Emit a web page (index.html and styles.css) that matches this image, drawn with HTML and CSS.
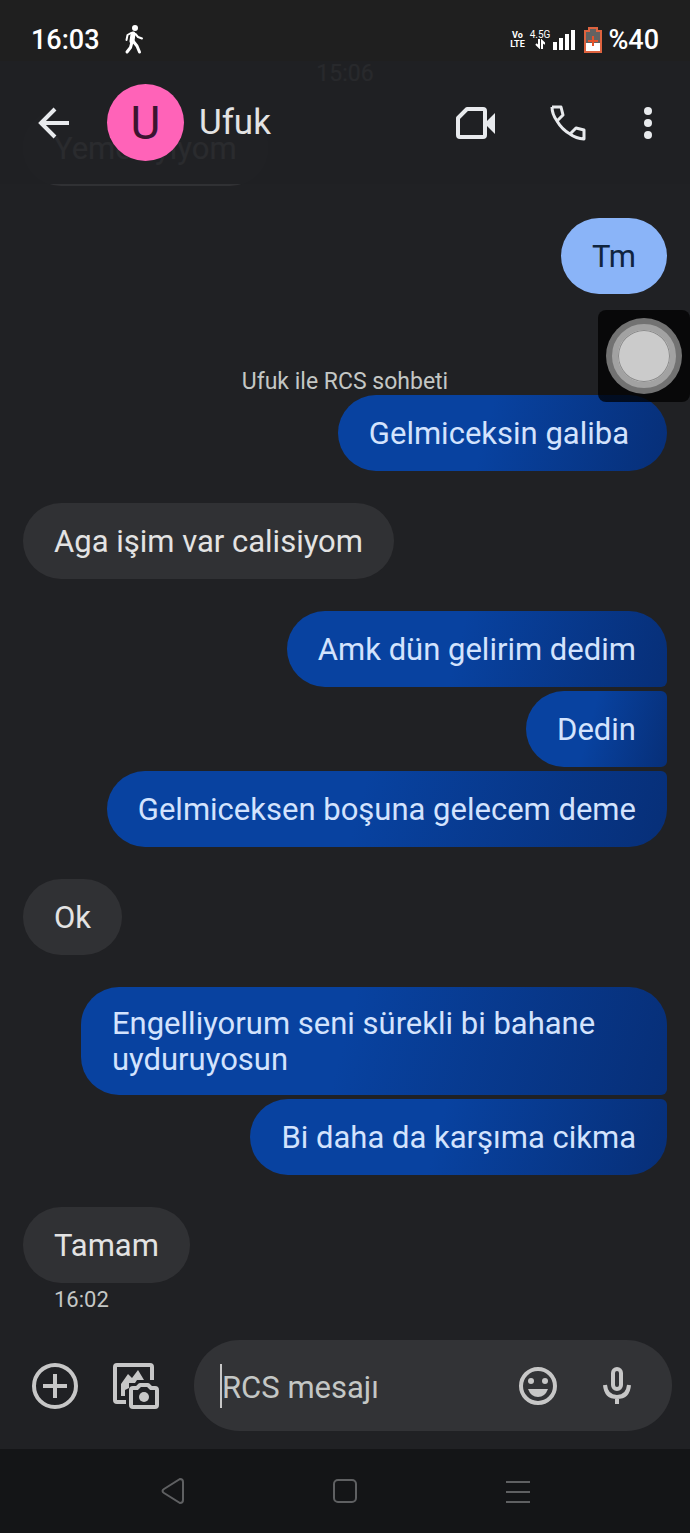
FILE: index.html
```html
<!DOCTYPE html>
<html lang="tr">
<head>
<meta charset="utf-8">
<meta name="viewport" content="width=device-width, initial-scale=1">
<title>Ufuk</title>
<link rel="stylesheet" href="styles.css">
</head>
<body>
<div class="phone">
  <div class="status">
    <span class="status-text">16:03</span>
    <svg class="walk" width="20" height="32" viewBox="0 0 20 32" fill="none" stroke="#fff" stroke-linecap="round" stroke-linejoin="round" aria-hidden="true">
      <circle cx="11" cy="4" r="3" fill="#fff" stroke="none"/>
      <path d="M9 10L8 17" stroke-width="5"/>
      <path d="M7 9L3.500 11L2.500 16M11.500 10L14 13L18 14.500" stroke-width="2"/>
      <path d="M8 18L6.500 23.500L3 28M9 17L13 22L15.500 28" stroke-width="3"/>
    </svg>
    <div class="status-right">
      <span class="volte"><span>Vo</span><span>LTE</span></span>
      <span class="net">
        <span>4.5G</span>
        <svg width="10" height="10" viewBox="0 0 10 10" fill="none" stroke="#fff" stroke-width="2" aria-hidden="true"><path d="M4 0V8L1 5M7 10V2L10 5"/></svg>
      </span>
      <svg width="22" height="20" viewBox="0 0 22 20" fill="#fff" aria-hidden="true"><path d="M0 12h4v8H0zM6 8h4v12H6zM12 4h4v16h-4zM18 0h4v20h-4z"/></svg>
      <svg class="battery" width="18" height="26" viewBox="0 0 18 26" aria-hidden="true">
        <path d="M1 4h4V1h8v3h4v21H1z" fill="#626262" stroke="#de633f" stroke-width="2"/>
        <path d="M2 16h14v8H2z" fill="#fff"/>
        <path d="M9 9v10M4 14h10" stroke="#e5532c" stroke-width="2"/>
      </svg>
      <span class="status-text">%40</span>
    </div>
  </div>

  <div class="screen">
    <header class="appbar">
      <button class="icon-btn back" aria-label="Geri">
        <svg width="32" height="32" viewBox="0 0 32 32" fill="none" stroke="#e8eaed" stroke-width="4"><path d="M31 16H4M17 2L3 16L17 30"/></svg>
      </button>
      <span class="avatar">U</span>
      <h1 class="title">Ufuk</h1>
      <button class="icon-btn" aria-label="Görüntülü arama">
        <svg width="40" height="32" viewBox="0 0 40 32"><path d="M11 2H27Q29 2 29 4V28Q29 30 27 30H4Q2 30 2 28V11Z" fill="none" stroke="#e8eaed" stroke-width="4" stroke-linejoin="round"/><path d="M30 15L39 6V27L30 18Z" fill="#e8eaed"/></svg>
      </button>
      <button class="icon-btn call" aria-label="Ara">
        <svg width="36" height="36" viewBox="0 0 36 36" fill="none" stroke="#e8eaed" stroke-width="3" stroke-linejoin="round"><path d="M2 2H11L13 10L7 16M2 2Q2 9 7 16Q12 24.500 20 29Q26 33.500 34 34V25L26 23L20 29"/></svg>
      </button>
      <button class="icon-btn more" aria-label="Diğer">
        <svg width="8" height="32" viewBox="0 0 8 32" fill="#e8eaed"><circle cx="4" cy="4" r="4"/><circle cx="4" cy="16" r="4"/><circle cx="4" cy="28" r="4"/></svg>
      </button>
    </header>

    <main class="thread">
      <p class="note first">15:06</p>
      <p class="msg in">Yemek yiyom</p>
      <p class="msg out sms">Tm</p>
      <p class="note chat-start">Ufuk ile RCS sohbeti</p>
      <p class="msg out lead">Gelmiceksin galiba</p>
      <p class="msg in">Aga işim var calisiyom</p>
      <div class="group">
        <p class="msg out">Amk dün gelirim dedim</p>
        <p class="msg out">Dedin</p>
        <p class="msg out">Gelmiceksen boşuna gelecem deme</p>
      </div>
      <p class="msg in">Ok</p>
      <div class="group">
        <p class="msg out">Engelliyorum seni sürekli bi bahane uyduruyosun</p>
        <p class="msg out">Bi daha da karşıma cikma</p>
      </div>
      <p class="msg in">Tamam</p>
      <p class="time">16:02</p>
    </main>
  </div>

  <form class="compose">
    <button type="button" class="icon-btn" aria-label="Ekle">
      <svg width="46" height="46" viewBox="0 0 46 46" fill="none" stroke="#c7c7c7" stroke-width="4"><circle cx="23" cy="23" r="21"/><path d="M23 11V35M11 23H35"/></svg>
    </button>
    <button type="button" class="icon-btn gallery" aria-label="Galeri">
      <svg width="46" height="46" viewBox="0 0 46 46"><path d="M13 39H4Q2 39 2 37V4Q2 2 4 2H37Q39 2 39 4V17" fill="none" stroke="#c7c7c7" stroke-width="4"/><path d="M8 33V21L15 11L19 15L25 7L31 17H24L22 20H16V25L12 27V33Z" fill="#c7c7c7"/><path d="M20 25H24L27 22H35L38 25H42Q44 25 44 27V42Q44 44 42 44H20Q18 44 18 42V27Q18 25 20 25Z" fill="none" stroke="#c7c7c7" stroke-width="4" stroke-linejoin="round"/><circle cx="31" cy="34" r="5" fill="#c7c7c7"/></svg>
    </button>
    <div class="field">
      <span class="caret"></span>
      <input class="field-input" type="text" placeholder="RCS mesajı" aria-label="RCS mesajı">
      <button type="button" class="icon-btn" aria-label="Emoji">
        <svg width="40" height="40" viewBox="0 0 40 40"><circle cx="20" cy="20" r="17" fill="none" stroke="#c7c7c7" stroke-width="4"/><circle cx="13" cy="15" r="3" fill="#c7c7c7"/><circle cx="27" cy="15" r="3" fill="#c7c7c7"/><path d="M10 23H30Q27 31 20 31T10 23Z" fill="#c7c7c7"/></svg>
      </button>
      <button type="button" class="icon-btn mic" aria-label="Ses kaydı">
        <svg width="28" height="38" viewBox="0 0 28 38" fill="none" stroke="#c7c7c7" stroke-width="4"><rect x="10" y="2" width="8" height="20" rx="4"/><path d="M2 18Q3 30 14 30T26 18M14 30V37"/></svg>
      </button>
    </div>
  </form>

  <nav class="navbar">
    <button class="icon-btn" aria-label="Geri">
      <svg width="24" height="26" viewBox="0 0 24 26" fill="none" stroke="#5f6062" stroke-width="2"><path d="M19 1Q22 1 22 4V22Q22 25 19 25L3 15Q0 13 3 11Z"/></svg>
    </button>
    <button class="icon-btn" aria-label="Ana ekran">
      <svg width="24" height="24" viewBox="0 0 24 24" fill="none" stroke="#5f6062" stroke-width="2"><rect x="1" y="1" width="22" height="22" rx="4"/></svg>
    </button>
    <button class="icon-btn" aria-label="Son uygulamalar">
      <svg width="24" height="24" viewBox="0 0 24 24" stroke="#5f6062" stroke-width="2"><path d="M0 3H24M0 13H24M0 23H24"/></svg>
    </button>
  </nav>

  <button class="assist" aria-label="Yardımcı dokunuş"><span class="assist-ring"><span class="assist-dot"></span></span></button>
</div>
</body>
</html>
```
FILE: styles.css
```css
* {
  box-sizing: border-box;
  margin: 0;
}

body {
  background: #202124;
  color: #e3e3e3;
  font-family: Roboto, sans-serif;
}

svg {
  display: block;
}

.phone {
  position: relative;
  display: flex;
  flex-direction: column;
  min-height: 100vh;
}

.icon-btn {
  display: flex;
  padding: 0;
  border: 0;
  background: none;
}

/* Status bar */
.status {
  display: flex;
  align-items: center;
  height: 61px;
  padding: 18px 31px 0;
  background: #1f1f1f;
  color: #fff;
}

.status-text {
  font-size: 27px;
  font-weight: 500;
  line-height: 32px;
}

.walk {
  margin-left: 24px;
}

.status-right {
  display: flex;
  align-items: center;
  gap: 3px;
  margin-left: auto;
}

.volte,
.net {
  display: flex;
  flex-direction: column;
  align-items: center;
  font-size: 10px;
  line-height: 9px;
}

.volte {
  margin-right: 2px;
  font-size: 9px;
  font-weight: 700;
}

.battery {
  margin: 0 3px 0 6px;
}

/* Conversation with a see-through bar above it */
.screen {
  display: grid;
  flex: 1;
}

.appbar,
.thread {
  grid-area: 1 / 1;
  min-width: 0;
}

.appbar {
  z-index: 1;
  align-self: start;
  display: flex;
  align-items: center;
  height: 123px;
  padding: 0 38px;
  background: rgba(32, 33, 36, 0.95);
}

.avatar {
  display: flex;
  align-items: center;
  justify-content: center;
  width: 77px;
  height: 77px;
  margin-left: 37px;
  border-radius: 50%;
  background: #ff63b8;
  color: #3c1430;
  font-size: 46px;
}

.title {
  flex: 1;
  margin-left: 15px;
  font-size: 35px;
  font-weight: 400;
}

.call {
  margin-left: 54px;
}

.more {
  margin-left: 58px;
}

.thread {
  display: flex;
  flex-direction: column;
  padding: 0 23px 27px;
}

.note,
.time {
  color: #c4c7c5;
  font-size: 23px;
  line-height: 26px;
}

.note {
  text-align: center;
}

.first {
  margin-bottom: -9px;
}

.chat-start {
  margin-top: 75px;
}

.time {
  margin: 4px 31px 0;
  font-size: 22px;
}

.msg {
  display: flex;
  align-items: center;
  min-height: 76px;
  max-width: 91%;
  margin-top: 32px;
  padding: 19px 31px 17px;
  border-radius: 38px;
  font-size: 31px;
  line-height: 36px;
}

.in {
  align-self: flex-start;
  background: #303134;
}

.out {
  align-self: flex-end;
  background: linear-gradient(105deg, #0842a0 45%, #072f78);
  color: #d3e3fd;
}

.sms {
  background: #8ab4f8;
  color: #10243e;
}

.lead {
  margin-top: 0;
  padding-right: 38px;
}

.group {
  display: flex;
  flex-direction: column;
  gap: 4px;
  margin-top: 32px;
}

.group .msg {
  margin-top: 0;
}

.group .msg:not(:first-child) {
  border-top-right-radius: 6px;
}

.group .msg:not(:last-child) {
  border-bottom-right-radius: 6px;
}

/* Composer */
.compose {
  display: flex;
  align-items: center;
  padding: 0 18px 18px 32px;
}

.gallery {
  margin-left: 35px;
}

.field {
  display: flex;
  flex: 1;
  align-items: center;
  height: 91px;
  min-width: 0;
  margin-left: 35px;
  padding: 0 41px 0 26px;
  border-radius: 46px;
  background: #323336;
}

.caret {
  width: 2px;
  height: 44px;
  background: #c7c7c7;
}

.field-input {
  flex: 1;
  min-width: 0;
  padding: 4px 0 0;
  border: 0;
  outline: 0;
  background: none;
  color: #e3e3e3;
  font: 31px/40px Roboto, sans-serif;
}

.field-input::placeholder {
  color: #c4c7c5;
  opacity: 1;
}

.mic {
  margin-left: 45px;
}

/* System navigation */
.navbar {
  display: flex;
  align-items: center;
  justify-content: space-evenly;
  height: 84px;
  padding: 0 12px;
  background: #141517;
}

.navbar .icon-btn {
  flex: 0 0 24px;
}

/* Floating touch button */
.assist {
  position: absolute;
  z-index: 2;
  top: 310px;
  right: 0;
  display: flex;
  align-items: center;
  justify-content: center;
  width: 92px;
  height: 92px;
  padding: 0;
  border: 0;
  border-radius: 8px;
  background: rgba(0, 0, 0, 0.75);
}

.assist-ring {
  display: flex;
  padding: 6px;
  border-radius: 50%;
  background: #727272;
}

.assist-dot {
  width: 64px;
  height: 64px;
  border: 6px solid #a2a2a2;
  border-radius: 50%;
  background: #cbcbcb;
  box-shadow: inset 0 0 0 1px #8a8a8a;
}
```
